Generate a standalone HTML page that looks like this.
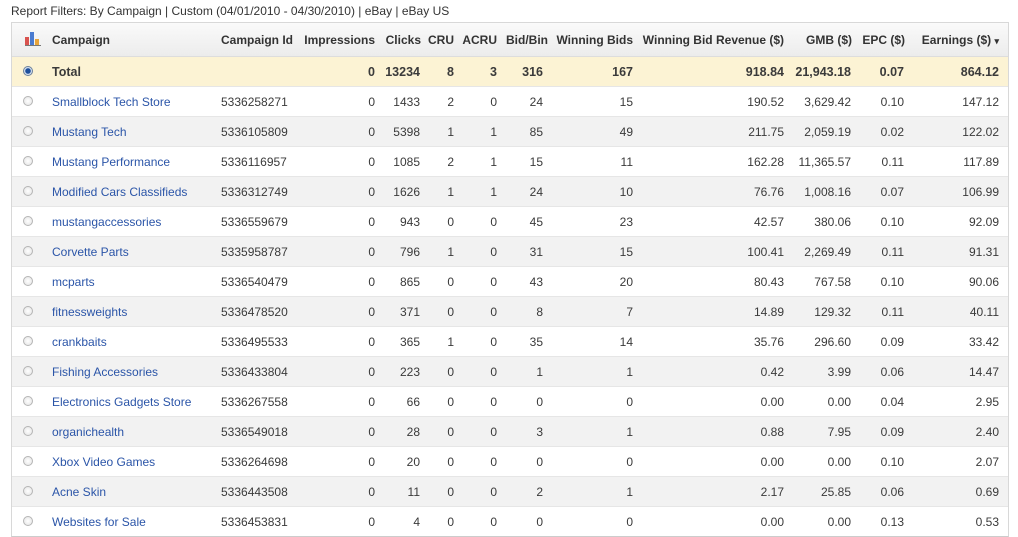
<!DOCTYPE html>
<html><head><style>
body{margin:0;width:1018px;height:537px;background:#fff;font-family:"Liberation Sans",Arial,sans-serif;font-size:12px;color:#3a3a3a;position:relative;overflow:hidden}
.top{position:absolute;left:11px;top:4px;font-size:12px;color:#333}
.tbl{position:absolute;left:11px;top:22px;width:996px;height:513px;border:1px solid #d8d8d8;border-bottom:1px solid #ccc}
.r{position:absolute;left:0;width:996px;height:30px;line-height:30px;border-bottom:1px solid #e6e6e6;box-sizing:border-box}
.r span{position:absolute;white-space:nowrap}
.h{top:0;height:34px;line-height:34px;background:linear-gradient(#fafafa,#ececec);font-weight:bold;color:#333;border-bottom:1px solid #ddd}
.t{background:#fcf3d4;font-weight:bold;font-size:12.5px}
.g{background:#f2f2f2}
.c1{left:40px}.c2{left:209px}
.c3{right:633px}.c4{right:588px}.c5{right:554px}.c6{right:511px}.c7{right:465px}.c8{right:375px}.c9{right:224px}.c10{right:157px}.c11{right:104px}.c12{right:9px}
.h .c3{right:622px}.h .c4{right:587px}.h .c5{right:554px}.h .c6{right:511px}.h .c7{right:460px}.h .c8{right:375px}.h .c9{right:224px}.h .c10{right:156px}.h .c11{right:103px}.h .c12{right:9px}
a{color:#2b55a8;text-decoration:none}
.rad{position:absolute;left:11px;top:9px;width:10px;height:10px;border-radius:50%;border:1px solid #b5b5b5;background:radial-gradient(#fff,#e2e2e2);box-sizing:border-box}
.t .rad{border-color:#6a7f9a;background:radial-gradient(#1d4f9c 0 2.5px,#c8d6ea 3px,#fff)}
</style></head><body>
<div class="top">Report Filters: By Campaign | Custom (04/01/2010 - 04/30/2010) | eBay | eBay US</div>
<div class="tbl">
<div class="r h"><svg style="position:absolute;left:13px;top:9px" width="16" height="14"><rect x="0" y="5" width="4" height="9" fill="#d9534f"/><rect x="5" y="0" width="4" height="14" fill="#4a7bd0"/><rect x="10" y="7" width="4" height="7" fill="#e8a43a"/><rect x="0" y="13" width="16" height="1" fill="#777"/></svg><span class="c1">Campaign</span><span class="c2">Campaign Id</span><span class="c3" style="right:633px">Impressions</span><span class="c4">Clicks</span><span class="c5">CRU</span><span class="c6">ACRU</span><span class="c7">Bid/Bin</span><span class="c8">Winning Bids</span><span class="c9">Winning Bid Revenue ($)</span><span class="c10">GMB ($)</span><span class="c11">EPC ($)</span><span class="c12">Earnings ($) <span style="position:static;font-size:9px">▾</span></span></div>
<div class="r t" style="top:34px"><i class="rad"></i><span class="c1">Total</span><span class="c3">0</span><span class="c4">13234</span><span class="c5">8</span><span class="c6">3</span><span class="c7">316</span><span class="c8">167</span><span class="c9">918.84</span><span class="c10">21,943.18</span><span class="c11">0.07</span><span class="c12">864.12</span></div>
<div class="r" style="top:64px"><i class="rad"></i><span class="c1"><a>Smallblock Tech Store</a></span><span class="c2">5336258271</span><span class="c3">0</span><span class="c4">1433</span><span class="c5">2</span><span class="c6">0</span><span class="c7">24</span><span class="c8">15</span><span class="c9">190.52</span><span class="c10">3,629.42</span><span class="c11">0.10</span><span class="c12">147.12</span></div>
<div class="r g" style="top:94px"><i class="rad"></i><span class="c1"><a>Mustang Tech</a></span><span class="c2">5336105809</span><span class="c3">0</span><span class="c4">5398</span><span class="c5">1</span><span class="c6">1</span><span class="c7">85</span><span class="c8">49</span><span class="c9">211.75</span><span class="c10">2,059.19</span><span class="c11">0.02</span><span class="c12">122.02</span></div>
<div class="r" style="top:124px"><i class="rad"></i><span class="c1"><a>Mustang Performance</a></span><span class="c2">5336116957</span><span class="c3">0</span><span class="c4">1085</span><span class="c5">2</span><span class="c6">1</span><span class="c7">15</span><span class="c8">11</span><span class="c9">162.28</span><span class="c10">11,365.57</span><span class="c11">0.11</span><span class="c12">117.89</span></div>
<div class="r g" style="top:154px"><i class="rad"></i><span class="c1"><a>Modified Cars Classifieds</a></span><span class="c2">5336312749</span><span class="c3">0</span><span class="c4">1626</span><span class="c5">1</span><span class="c6">1</span><span class="c7">24</span><span class="c8">10</span><span class="c9">76.76</span><span class="c10">1,008.16</span><span class="c11">0.07</span><span class="c12">106.99</span></div>
<div class="r" style="top:184px"><i class="rad"></i><span class="c1"><a>mustangaccessories</a></span><span class="c2">5336559679</span><span class="c3">0</span><span class="c4">943</span><span class="c5">0</span><span class="c6">0</span><span class="c7">45</span><span class="c8">23</span><span class="c9">42.57</span><span class="c10">380.06</span><span class="c11">0.10</span><span class="c12">92.09</span></div>
<div class="r g" style="top:214px"><i class="rad"></i><span class="c1"><a>Corvette Parts</a></span><span class="c2">5335958787</span><span class="c3">0</span><span class="c4">796</span><span class="c5">1</span><span class="c6">0</span><span class="c7">31</span><span class="c8">15</span><span class="c9">100.41</span><span class="c10">2,269.49</span><span class="c11">0.11</span><span class="c12">91.31</span></div>
<div class="r" style="top:244px"><i class="rad"></i><span class="c1"><a>mcparts</a></span><span class="c2">5336540479</span><span class="c3">0</span><span class="c4">865</span><span class="c5">0</span><span class="c6">0</span><span class="c7">43</span><span class="c8">20</span><span class="c9">80.43</span><span class="c10">767.58</span><span class="c11">0.10</span><span class="c12">90.06</span></div>
<div class="r g" style="top:274px"><i class="rad"></i><span class="c1"><a>fitnessweights</a></span><span class="c2">5336478520</span><span class="c3">0</span><span class="c4">371</span><span class="c5">0</span><span class="c6">0</span><span class="c7">8</span><span class="c8">7</span><span class="c9">14.89</span><span class="c10">129.32</span><span class="c11">0.11</span><span class="c12">40.11</span></div>
<div class="r" style="top:304px"><i class="rad"></i><span class="c1"><a>crankbaits</a></span><span class="c2">5336495533</span><span class="c3">0</span><span class="c4">365</span><span class="c5">1</span><span class="c6">0</span><span class="c7">35</span><span class="c8">14</span><span class="c9">35.76</span><span class="c10">296.60</span><span class="c11">0.09</span><span class="c12">33.42</span></div>
<div class="r g" style="top:334px"><i class="rad"></i><span class="c1"><a>Fishing Accessories</a></span><span class="c2">5336433804</span><span class="c3">0</span><span class="c4">223</span><span class="c5">0</span><span class="c6">0</span><span class="c7">1</span><span class="c8">1</span><span class="c9">0.42</span><span class="c10">3.99</span><span class="c11">0.06</span><span class="c12">14.47</span></div>
<div class="r" style="top:364px"><i class="rad"></i><span class="c1"><a>Electronics Gadgets Store</a></span><span class="c2">5336267558</span><span class="c3">0</span><span class="c4">66</span><span class="c5">0</span><span class="c6">0</span><span class="c7">0</span><span class="c8">0</span><span class="c9">0.00</span><span class="c10">0.00</span><span class="c11">0.04</span><span class="c12">2.95</span></div>
<div class="r g" style="top:394px"><i class="rad"></i><span class="c1"><a>organichealth</a></span><span class="c2">5336549018</span><span class="c3">0</span><span class="c4">28</span><span class="c5">0</span><span class="c6">0</span><span class="c7">3</span><span class="c8">1</span><span class="c9">0.88</span><span class="c10">7.95</span><span class="c11">0.09</span><span class="c12">2.40</span></div>
<div class="r" style="top:424px"><i class="rad"></i><span class="c1"><a>Xbox Video Games</a></span><span class="c2">5336264698</span><span class="c3">0</span><span class="c4">20</span><span class="c5">0</span><span class="c6">0</span><span class="c7">0</span><span class="c8">0</span><span class="c9">0.00</span><span class="c10">0.00</span><span class="c11">0.10</span><span class="c12">2.07</span></div>
<div class="r g" style="top:454px"><i class="rad"></i><span class="c1"><a>Acne Skin</a></span><span class="c2">5336443508</span><span class="c3">0</span><span class="c4">11</span><span class="c5">0</span><span class="c6">0</span><span class="c7">2</span><span class="c8">1</span><span class="c9">2.17</span><span class="c10">25.85</span><span class="c11">0.06</span><span class="c12">0.69</span></div>
<div class="r" style="top:484px;border-bottom:none"><i class="rad"></i><span class="c1"><a>Websites for Sale</a></span><span class="c2">5336453831</span><span class="c3">0</span><span class="c4">4</span><span class="c5">0</span><span class="c6">0</span><span class="c7">0</span><span class="c8">0</span><span class="c9">0.00</span><span class="c10">0.00</span><span class="c11">0.13</span><span class="c12">0.53</span></div>
</div>
</body></html>
